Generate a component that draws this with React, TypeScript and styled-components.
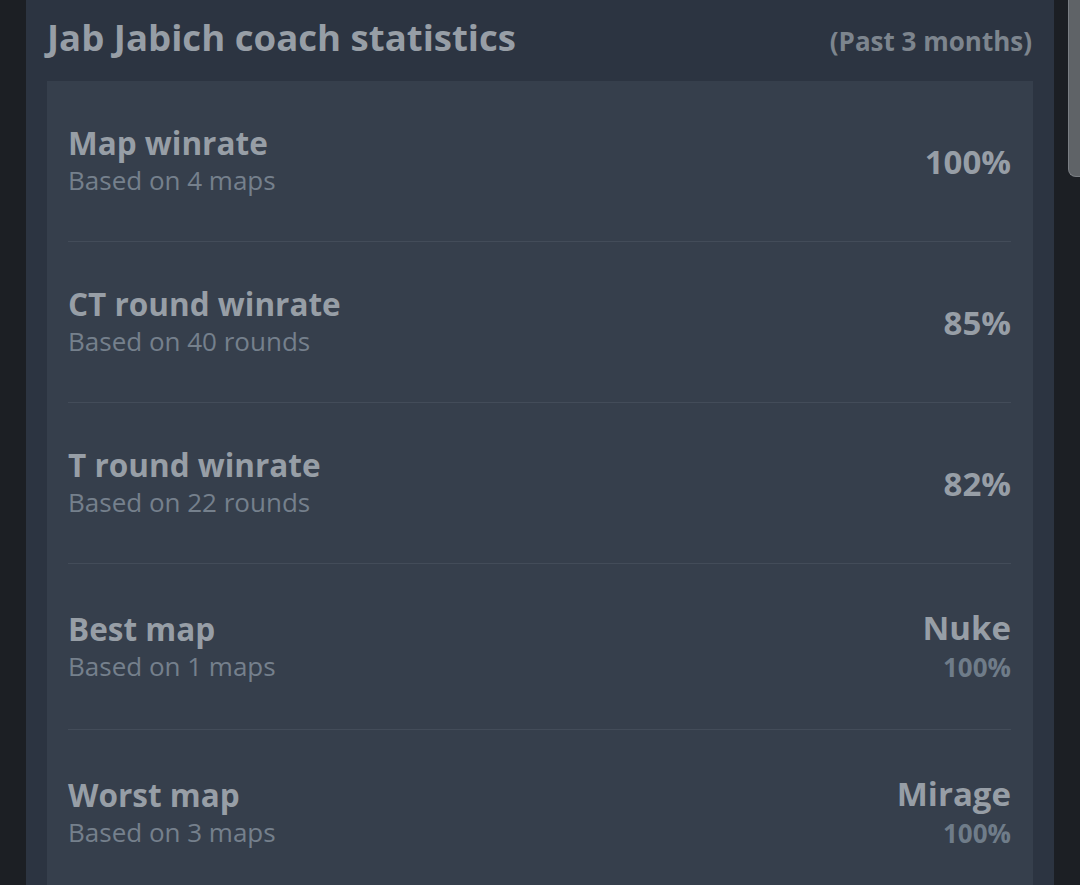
import React from "react";
import styled, { createGlobalStyle } from "styled-components";

const Global = createGlobalStyle`
  html, body { margin: 0; padding: 0; background: #1c1f24; overflow: hidden; }
  body { font-family: "Open Sans", "Noto Sans", sans-serif; }
`;

const Screen = styled.div`
  display: flex;
  width: 1080px;
  height: 885px;
  overflow: hidden;
  background: #1c1f24;
`;

const Gutter = styled.div`
  width: 26px;
  flex: none;
`;

const Panel = styled.section`
  width: 1028px;
  flex: none;
  box-sizing: border-box;
  padding: 12px 21px 0 21px;
  background: #2c3441;
  display: flex;
  flex-direction: column;
`;

const Header = styled.header`
  flex: none;
  display: flex;
  justify-content: space-between;
  align-items: baseline;
  height: 69px;
`;

const Title = styled.h1`
  margin: 0;
  font-size: 36.6px;
  line-height: 50px;
  font-weight: 700;
  color: #979ea6;
`;

const Period = styled.span`
  font-size: 26px;
  font-weight: 700;
  color: #7d858e;
  margin-right: 1px;
`;

const Card = styled.div`
  flex: none;
  background: #363f4c;
  padding: 0 22px 0 21px;
`;

const Row = styled.div`
  display: flex;
  justify-content: space-between;
  align-items: center;
  padding: 43px 0 42px;
  border-bottom: 1px solid #434c59;
`;

const Block = styled.div<{ $right?: boolean }>`
  display: flex;
  flex-direction: column;
  align-items: ${(p) => (p.$right ? "flex-end" : "flex-start")};
`;

const Label = styled.div`
  font-size: 31.5px;
  line-height: 38px;
  font-weight: 700;
  color: #979ea6;
`;

const Sub = styled.div`
  font-size: 26px;
  line-height: 37px;
  font-weight: 400;
  color: #75808c;
`;

const Value = styled.div`
  font-size: 33px;
  line-height: 41px;
  font-weight: 700;
  color: #979ea6;
`;

const SubValue = styled.div`
  font-size: 26px;
  line-height: 39px;
  font-weight: 700;
  color: #6f7c89;
`;

const ScrollTrack = styled.div`
  flex: 1;
  display: flex;
  justify-content: flex-end;
  align-items: flex-start;
`;

const Thumb = styled.div`
  width: 12px;
  height: 177px;
  background: #5f6367;
  border-left: 1px solid #7b7f84;
  border-bottom: 1px solid #7b7f84;
  border-bottom-left-radius: 8px;
  box-sizing: border-box;
`;

type Stat = { label: string; sub: string; value: string; subValue?: string };

const stats: Stat[] = [
  { label: "Map winrate", sub: "Based on 4 maps", value: "100%" },
  { label: "CT round winrate", sub: "Based on 40 rounds", value: "85%" },
  { label: "T round winrate", sub: "Based on 22 rounds", value: "82%" },
  { label: "Best map", sub: "Based on 1 maps", value: "Nuke", subValue: "100%" },
  { label: "Worst map", sub: "Based on 3 maps", value: "Mirage", subValue: "100%" },
];

export default function App() {
  return (
    <>
      <Global />
      <Screen>
        <Gutter />
        <Panel>
          <Header>
            <Title>Jab Jabich coach statistics</Title>
            <Period>(Past 3 months)</Period>
          </Header>
          <Card>
            {stats.map((s) => (
              <Row key={s.label}>
                <Block>
                  <Label>{s.label}</Label>
                  <Sub>{s.sub}</Sub>
                </Block>
                <Block $right>
                  <Value>{s.value}</Value>
                  {s.subValue && <SubValue>{s.subValue}</SubValue>}
                </Block>
              </Row>
            ))}
          </Card>
        </Panel>
        <ScrollTrack>
          <Thumb />
        </ScrollTrack>
      </Screen>
    </>
  );
}
